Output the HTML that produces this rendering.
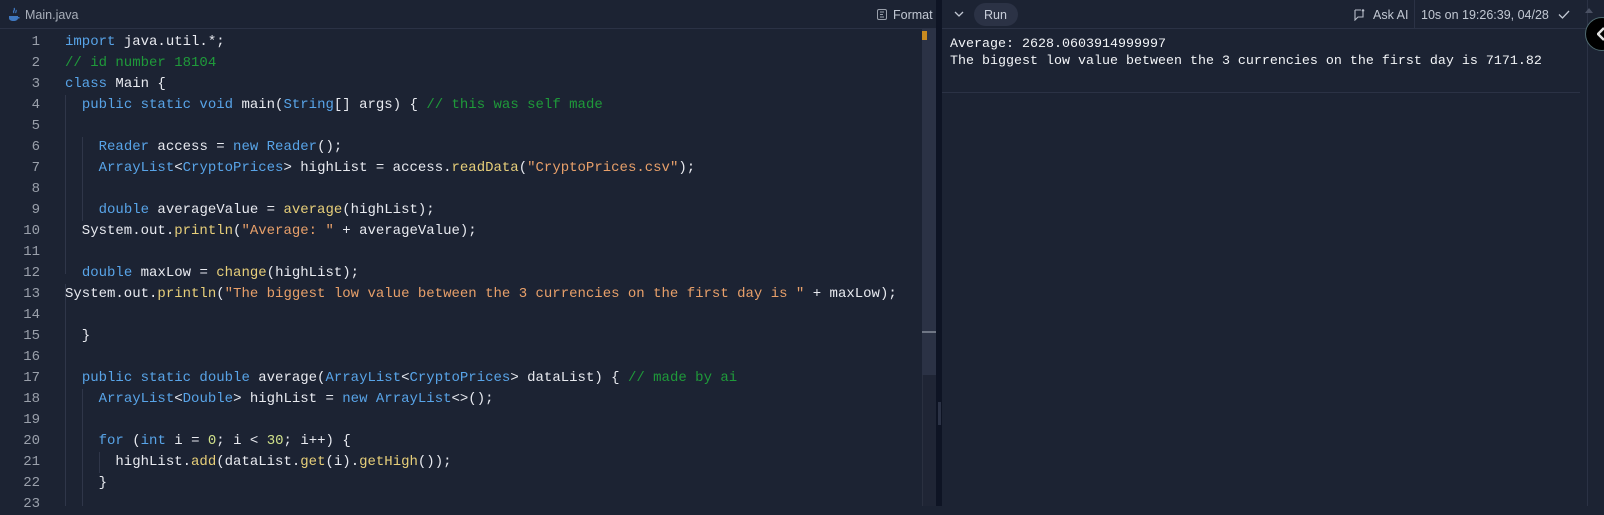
<!DOCTYPE html>
<html><head><meta charset="utf-8"><style>
*{margin:0;padding:0;box-sizing:border-box}
body{width:1604px;height:506px;overflow:hidden;background:#1c2333;font-family:"Liberation Sans",sans-serif;position:relative}
.hdr{position:absolute;top:0;height:29px;border-bottom:1px solid #2b3245;background:#1c2333}
.ui{position:absolute;font-size:12.5px;color:#c2c8d3;top:8px}
.code{position:absolute;left:0;top:32px;font-family:"Liberation Mono",monospace;font-size:14px;line-height:21px;color:#e8eaf0}
.ln{position:absolute;left:0;width:40px;text-align:right;color:#9aa0ab}
.tx{position:absolute;left:65px;white-space:pre}
.k{color:#58a4e8}.c{color:#1f9a3a}.s{color:#e8a06a}.m{color:#e7cf7a}.n{color:#cfe08a}
.out{position:absolute;left:950px;top:37px;font-family:"Liberation Mono",monospace;font-size:13.33px;line-height:16.5px;color:#f2f4f7;white-space:pre}
.guide{position:absolute;width:1px;background:#2f3649}
</style></head><body>
<div class="hdr" style="left:0;width:936px"></div>
<div class="hdr" style="left:942px;width:645px"></div>
<svg style="position:absolute;left:8px;top:7px" width="12" height="16" viewBox="0 0 12 16"><path d="M6 1c2 2-2 3 0 5M8 3c1 1-1 2 0 3" stroke="#3f78c0" fill="none" stroke-width="1.2"/><path d="M1 9h9v2c0 2-2 3-4.5 3S1 13 1 11z M10 10h1.5v1.5H10" fill="#3f78c0"/></svg>
<div class="ui" style="left:25px;color:#a9afba">Main.java</div>
<svg style="position:absolute;left:877px;top:9px" width="10" height="11"><rect x=".5" y=".5" width="9" height="10" rx="1.5" fill="none" stroke="#9aa0ab"/><path d="M3 3h4M3 5.5h3M3 8h4" stroke="#9aa0ab"/></svg>
<div class="ui" style="left:893px">Format</div>
<div style="position:absolute;left:922px;top:29px;width:14px;height:346px;background:#2b3245"></div>
<div style="position:absolute;left:922px;top:375px;width:14px;height:131px;background:#1f2535;border-left:1px solid #2a3040"></div>
<div style="position:absolute;left:922px;top:331px;width:14px;height:2px;background:#6f7685"></div>
<div style="position:absolute;left:922px;top:31px;width:5px;height:9px;background:#c98a1f"></div>
<div style="position:absolute;left:936px;top:0;width:6px;height:506px;background:#0e1424"></div>
<div style="position:absolute;left:938px;top:402px;width:3px;height:23px;background:#2b3245"></div>
<svg style="position:absolute;left:954px;top:11px" width="10" height="7"><path d="M1 1l4 4 4-4" stroke="#c2c8d3" fill="none" stroke-width="1.3"/></svg>
<div style="position:absolute;left:974px;top:3px;width:44px;height:23px;border-radius:12px;background:#2b3245"></div>
<div class="ui" style="left:984px;color:#c8ceda">Run</div>
<svg style="position:absolute;left:1354px;top:9px" width="11" height="12"><path d="M1 1h6M9 3v5H4l-3 3V1" stroke="#b8bec9" fill="none" stroke-width="1.1"/><circle cx="9" cy="1.5" r="1.3" fill="#b8bec9"/></svg>
<div class="ui" style="left:1373px">Ask AI</div>
<div style="position:absolute;left:1414px;top:0;width:1px;height:29px;background:#2b3245"></div>
<div class="ui" style="left:1421px">10s on 19:26:39, 04/28</div>
<svg style="position:absolute;left:1558px;top:10px" width="12" height="9"><path d="M1 4.5l3.5 3.5L11 1" stroke="#c2c8d3" fill="none" stroke-width="1.3"/></svg>
<div style="position:absolute;left:1587px;top:0;width:17px;height:506px;background:#1c2333;border-left:1px solid #2b3245"></div>
<div style="position:absolute;left:1585px;top:8px;width:0;height:0;border:4px solid transparent;border-bottom:5px solid #4a5163;border-top:0"></div>
<div style="position:absolute;left:1585px;top:17px;width:34px;height:34px;border-radius:50%;background:#000;border:1.5px solid #4f6a70"></div>
<svg style="position:absolute;left:1597px;top:27px" width="8" height="14"><path d="M7 1L1 7l6 6" stroke="#e0e0e0" stroke-width="2.5" fill="none"/></svg>
<div style="position:absolute;left:942px;top:92px;width:638px;height:1px;background:#2b3245"></div>
<div class="out">Average: 2628.0603914999997
The biggest low value between the 3 currencies on the first day is 7171.82</div>
<div class="guide" style="left:65px;top:95px;height:179px"></div>
<div class="guide" style="left:82px;top:137px;height:84px"></div>
<div class="guide" style="left:65px;top:284px;height:222px"></div>
<div class="guide" style="left:82px;top:389px;height:117px"></div>
<div class="guide" style="left:99px;top:452px;height:21px"></div>
<div class="code">
<div class="ln" style="top:0">1</div><div class="tx" style="top:0"><span class="k">import</span> java.util.*;</div>
<div class="ln" style="top:21px">2</div><div class="tx c" style="top:21px">// id number 18104</div>
<div class="ln" style="top:42px">3</div><div class="tx" style="top:42px"><span class="k">class</span> Main {</div>
<div class="ln" style="top:63px">4</div><div class="tx" style="top:63px">  <span class="k">public static void</span> main(<span class="k">String</span>[] args) { <span class="c">// this was self made</span></div>
<div class="ln" style="top:84px">5</div>
<div class="ln" style="top:105px">6</div><div class="tx" style="top:105px">    <span class="k">Reader</span> access = <span class="k">new Reader</span>();</div>
<div class="ln" style="top:126px">7</div><div class="tx" style="top:126px">    <span class="k">ArrayList</span>&lt;<span class="k">CryptoPrices</span>&gt; highList = access.<span class="m">readData</span>(<span class="s">"CryptoPrices.csv"</span>);</div>
<div class="ln" style="top:147px">8</div>
<div class="ln" style="top:168px">9</div><div class="tx" style="top:168px">    <span class="k">double</span> averageValue = <span class="m">average</span>(highList);</div>
<div class="ln" style="top:189px">10</div><div class="tx" style="top:189px">  System.out.<span class="m">println</span>(<span class="s">"Average: "</span> + averageValue);</div>
<div class="ln" style="top:210px">11</div>
<div class="ln" style="top:231px">12</div><div class="tx" style="top:231px">  <span class="k">double</span> maxLow = <span class="m">change</span>(highList);</div>
<div class="ln" style="top:252px">13</div><div class="tx" style="top:252px">System.out.<span class="m">println</span>(<span class="s">"The biggest low value between the 3 currencies on the first day is "</span> + maxLow);</div>
<div class="ln" style="top:273px">14</div>
<div class="ln" style="top:294px">15</div><div class="tx" style="top:294px">  }</div>
<div class="ln" style="top:315px">16</div>
<div class="ln" style="top:336px">17</div><div class="tx" style="top:336px">  <span class="k">public static double</span> average(<span class="k">ArrayList</span>&lt;<span class="k">CryptoPrices</span>&gt; dataList) { <span class="c">// made by ai</span></div>
<div class="ln" style="top:357px">18</div><div class="tx" style="top:357px">    <span class="k">ArrayList</span>&lt;<span class="k">Double</span>&gt; highList = <span class="k">new ArrayList</span>&lt;&gt;();</div>
<div class="ln" style="top:378px">19</div>
<div class="ln" style="top:399px">20</div><div class="tx" style="top:399px">    <span class="k">for</span> (<span class="k">int</span> i = <span class="n">0</span>; i &lt; <span class="n">30</span>; i++) {</div>
<div class="ln" style="top:420px">21</div><div class="tx" style="top:420px">      highList.<span class="m">add</span>(dataList.<span class="m">get</span>(i).<span class="m">getHigh</span>());</div>
<div class="ln" style="top:441px">22</div><div class="tx" style="top:441px">    }</div>
<div class="ln" style="top:462px">23</div>
</div>
</body></html>
